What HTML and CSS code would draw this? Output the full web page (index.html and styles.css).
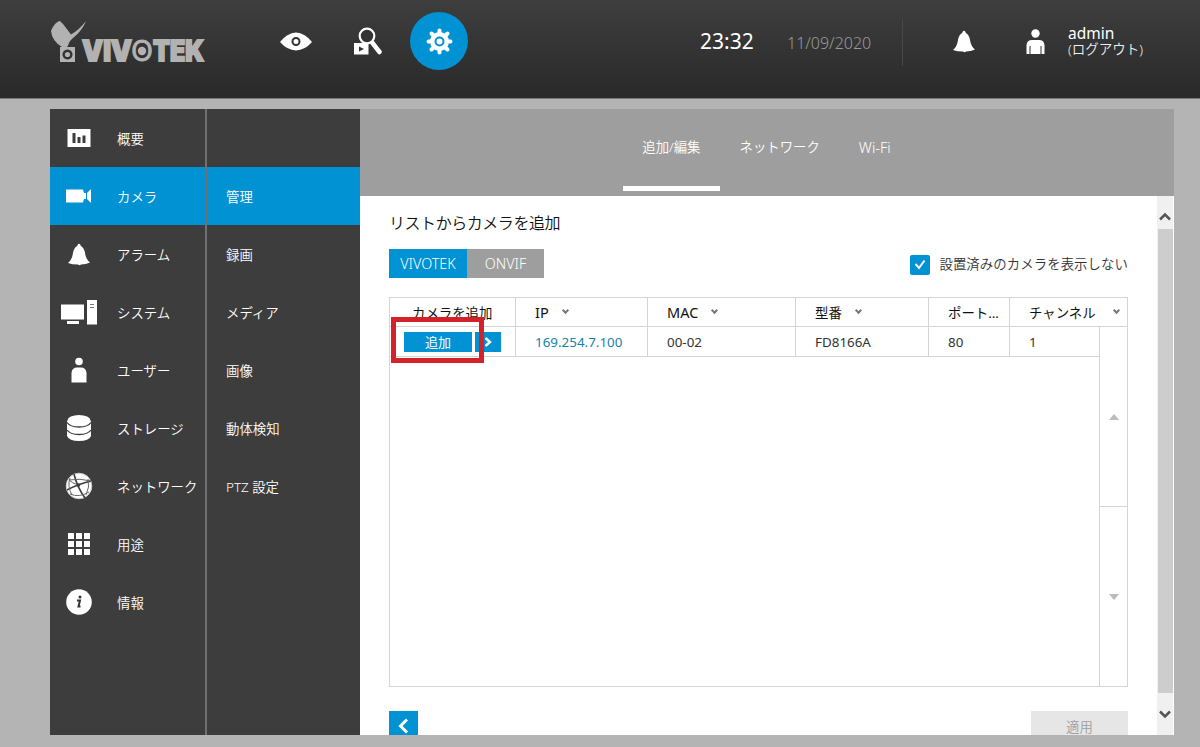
FILE: index.html
```html
<!DOCTYPE html>
<html lang="ja">
<head>
    <meta charset="UTF-8">
    <meta name="viewport" content="width=device-width, initial-scale=1.0">
    <title>VIVOTEK NVR</title>
    <link rel="stylesheet" href="styles.css">
</head>
<body>

    <!-- Header -->
    <header class="header">
        <svg class="logo" width="160" height="60" viewBox="0 0 160 60">
            <path d="M1 11Q2 8 5 4Q8 1 10 1L13 4L21 14.500Q29 10 36 1Q32 11 23 18Q19 21 18 26Q15 28.500 12 27Q2 21 1 11Z"/>
            <path fill-rule="evenodd" d="M10 27H25V42H10Z M17.500 29.500a5 5 0 1 0 .01 0Z"/>
            <circle cx="17.500" cy="34.500" r="2.600"/>
            <text class="logo-text" y="41" x="32" textLength="50" lengthAdjust="spacingAndGlyphs">VIV</text>
            <text class="logo-text logo-o" y="41" x="81" textLength="22" lengthAdjust="spacingAndGlyphs">O</text>
            <circle cx="92" cy="31" r="4.200"/>
            <text class="logo-text" y="41" x="103" textLength="51" lengthAdjust="spacingAndGlyphs">TEK</text>
        </svg>
        <nav class="top-nav">
            <a href="#" class="nav-eye">
                <svg width="32" height="20" viewBox="0 0 32 20"><path fill="#fff" d="M0 10 Q7 1 16 0.500 Q25 1 32 10 Q25 18 16 18.500 Q7 18 0 10Z"/><circle cx="16" cy="9.500" r="3.500" fill="#fff" stroke="#333" stroke-width="2"/></svg>
            </a>
            <a href="#" class="nav-search">
                <svg width="30" height="28" viewBox="0 0 30 28"><path fill="#fff" d="M1 16H15.500V27.500H1Z"/><circle cx="14" cy="9" r="7.300" fill="#343434" stroke="#fff" stroke-width="2.200"/><path d="M19.500 16L26.500 25" stroke="#fff" stroke-width="4.500" stroke-linecap="round"/><path fill="#333" d="M6 19.500L11 22L6 24.500Z"/></svg>
            </a>
            <a href="#" class="nav-setup">
                <svg width="28" height="28" viewBox="-14.500 -14.500 28 28"><circle r="9.500" fill="#fff"/><path d="M0-11V11M-11 0H11M-8-8L8 8M-8 8L8-8" stroke="#fff" stroke-width="4" stroke-linecap="round"/><circle r="4" fill="#fff" stroke="#0092d3" stroke-width="2"/></svg>
            </a>
        </nav>
        <span class="time">23:32</span>
        <span class="date">11/09/2020</span>
        <span class="divider"></span>
        <svg class="header-bell" width="22" height="23" viewBox="0 0 22 23"><path fill="#fff" d="M9.500 2Q11-.5 12.500 2L12.800 3Q16 4.500 17 10Q18 16.500 22 19.500Q18 21.500 13 21.500Q11.500 23 10 21.500Q4 21.500 0 20Q4 17 5 10Q6 4.500 9.200 3Z"/></svg>
        <svg class="header-user" width="19" height="26" viewBox="0 0 19 26"><circle cx="9.500" cy="4.500" r="4.200" fill="#fff"/><path fill="#fff" d="M0.500 25V16Q1 11 6 11H13Q18 11 18.500 16V25Z"/><path d="M4 17V25M15 17V25" stroke="#333" stroke-width="1"/></svg>
        <div class="account">
            <div class="account-name">admin</div>
            <a href="#" class="logout">(ログアウト)</a>
        </div>
    </header>

    <div class="app">
        <!-- Main menu -->
        <ul class="menu">
            <li><span class="icon"><svg width="24" height="18" viewBox="0 0 24 18"><path fill="#fff" d="M.5 0H23.500V18H.5Z"/><path fill="#3d3d3d" d="M5.500 4H8.500V14H5.500ZM10.500 8H13.500V14H10.500ZM15.500 6.500H18.500V14H15.500Z"/></svg></span><span>概要</span></li>
            <li class="active"><span class="icon"><svg width="26" height="14" viewBox="0 0 26 14"><path fill="#fff" d="M0 .5H17L18 4H20V10H18L17 13.500H0ZM21 4L25 0V14L21 10Z"/></svg></span><span>カメラ</span></li>
            <li><span class="icon"><svg width="22" height="23" viewBox="0 0 22 23"><path fill="#fff" d="M9.500 2Q11-.5 12.500 2L12.800 3Q16 4.500 17 10Q18 16.500 22 19.500Q18 21.500 13 21.500Q11.500 23 10 21.500Q4 21.500 0 20Q4 17 5 10Q6 4.500 9.200 3Z"/></svg></span><span>アラーム</span></li>
            <li><span class="icon"><svg width="36" height="26" viewBox="0 0 36 26"><path fill="#fff" d="M0 5.500H23V20.500H0ZM6 22H18V25H6ZM26 1H36V25.500H26Z"/><path d="M29 5.500H33M29 8.500H33" stroke="#777"/></svg></span><span>システム</span></li>
            <li><span class="icon"><svg width="16" height="26" viewBox="0 0 16 26"><circle cx="8" cy="4.500" r="3.800" fill="#fff"/><path fill="#fff" d="M.5 25.500V16Q1 10.500 6 10.500H10Q15 10.500 15.500 16V25.500Z"/></svg></span><span>ユーザー</span></li>
            <li><span class="icon"><svg width="26" height="28" viewBox="0 0 26 28"><path fill="#fff" d="M1 7V22Q3 27 13 27T25 22V7Z"/><ellipse cx="13" cy="6.500" rx="11.500" ry="5.500" fill="#fff"/><path d="M1 8.500Q4 13 13 13T25 8.500M1 16Q4 20.500 13 20.500T25 16" fill="none" stroke="#3d3d3d" stroke-width="1.300"/></svg></span><span>ストレージ</span></li>
            <li><span class="icon"><svg width="28" height="28" viewBox="0 0 28 28"><circle cx="14" cy="14" r="12.800" fill="#fff" stroke="#ccc"/><path d="M9 2Q12 15 20 26M26 9Q13 12 2 18" fill="none" stroke="#3d3d3d" stroke-width="1.600"/><path d="M4 8Q15 6 26 9M5 22Q14 26 24 20M5 6Q2 14 7 23M4 8Q7 11 13 13M23 7Q25 15 21 23" fill="none" stroke="#666"/><circle cx="13.500" cy="13" r="1.800" fill="#3d3d3d"/></svg></span><span>ネットワーク</span></li>
            <li><span class="icon"><svg width="22" height="22" viewBox="0 0 22 22"><path fill="#fff" d="M0 0H6V6H0ZM8 0H14V6H8ZM16 0H22V6H16ZM0 8H6V14H0ZM8 8H14V14H8ZM16 8H22V14H16ZM0 16H6V22H0ZM8 16H14V22H8ZM16 16H22V22H16Z"/></svg></span><span>用途</span></li>
            <li><span class="icon"><svg width="26" height="26" viewBox="0 0 26 26"><circle cx="13" cy="13" r="12.800" fill="#fff"/><circle cx="14" cy="8" r="1.500" fill="#333"/><path d="M11 11.500H14L12.500 17.500H14.500" fill="none" stroke="#333" stroke-width="2"/></svg></span><span>情報</span></li>
        </ul>

        <!-- Sub menu -->
        <ul class="submenu">
            <li></li>
            <li class="active">管理</li>
            <li>録画</li>
            <li>メディア</li>
            <li>画像</li>
            <li>動体検知</li>
            <li>PTZ 設定</li>
        </ul>

        <main class="main">
            <nav class="tabs">
                <a href="#" class="tab selected">追加/編集</a>
                <a href="#" class="tab">ネットワーク</a>
                <a href="#" class="tab latin">Wi-Fi</a>
            </nav>

            <div class="body">
                <section class="content">
                    <h2>リストからカメラを追加</h2>

                    <div class="filter">
                        <div class="toggle">
                            <button class="on">VIVOTEK</button>
                            <button>ONVIF</button>
                        </div>
                        <div class="hide-installed">
                            <span class="checkbox"><svg width="12" height="11" viewBox="0 0 12 11"><path d="M1.500 5L5 9L10.500 1.500" fill="none" stroke="#fff" stroke-width="2"/></svg></span>
                            <span>設置済みのカメラを表示しない</span>
                        </div>
                    </div>

                    <div class="table">
                        <div class="row head">
                            <span class="first">カメラを追加</span>
                            <span class="latin">IP <i class="sort"></i></span>
                            <span class="latin">MAC <i class="sort"></i></span>
                            <span>型番 <i class="sort"></i></span>
                            <span>ポート...</span>
                            <span>チャンネル <i class="sort"></i></span>
                        </div>
                        <div class="table-body">
                            <div class="rows">
                                <div class="row">
                                    <span class="first actions">
                                        <button class="add">追加</button>
                                        <button class="go"><svg width="8" height="10" viewBox="0 0 8 10"><path d="M1.500 1L6 5L1.500 9" fill="none" stroke="#fff" stroke-width="2.400"/></svg></button>
                                        <span class="highlight"></span>
                                    </span>
                                    <span class="ip">169.254.7.100</span>
                                    <span>00-02</span>
                                    <span>FD8166A</span>
                                    <span>80</span>
                                    <span>1</span>
                                </div>
                            </div>
                            <div class="pager">
                                <div><i class="up"></i></div>
                                <div><i class="down"></i></div>
                            </div>
                        </div>
                    </div>

                    <div class="footer">
                        <button class="back"><svg width="12" height="16" viewBox="0 0 12 16"><path d="M9 1.500L2.500 8L9 14.500" fill="none" stroke="#fff" stroke-width="3"/></svg></button>
                        <button class="apply">適用</button>
                    </div>
                </section>

                <div class="scrollbar">
                    <div class="scroll-up"><svg width="12" height="9" viewBox="0 0 12 9"><path d="M1 7.500L6 2.500L11 7.500" fill="none" stroke="#555" stroke-width="2.500"/></svg></div>
                    <div class="thumb"></div>
                    <div class="scroll-down"><svg width="12" height="9" viewBox="0 0 12 9"><path d="M1 1.500L6 6.500L11 1.500" fill="none" stroke="#555" stroke-width="2.500"/></svg></div>
                </div>
            </div>
        </main>
    </div>

</body>
</html>
```
FILE: styles.css
```css
* {
    box-sizing: border-box;
}
body {
    font-family: "Noto Sans", "Noto Sans CJK JP", sans-serif;
    font-size: 13.4px;
    font-weight: 350;
    background-color: #b4b4b4;
    margin: 0;
    height: 747px;
    overflow: hidden;
}
a {
    color: inherit;
    text-decoration: none;
}
svg {
    display: block;
    flex: none;
}
button {
    border: none;
    padding: 0;
    font: inherit;
    color: #fff;
    background-color: #0092d3;
    display: flex;
    align-items: center;
    justify-content: center;
    cursor: pointer;
}
ul {
    list-style: none;
    margin: 0;
    padding: 0;
}

/* Header */
.header {
    height: 99px;
    padding-left: 50px;
    display: flex;
    align-items: flex-start;
    background: linear-gradient(#3e3e3e, #292929);
    border-bottom: 1px solid #777;
    color: #fff;
    white-space: nowrap;
}
.logo {
    margin-top: 20px;
    fill: #b2b2b2;
}
.logo-text {
    font-family: Inter, sans-serif;
    font-weight: 900;
    font-size: 28px;
    stroke: #b2b2b2;
    stroke-width: 1.8px;
}
.logo-o {
    font-weight: 400;
    stroke-width: 0.8px;
}
.top-nav {
    display: flex;
    width: 490px;
    padding-left: 70px;
}
.nav-eye {
    padding-top: 32px;
}
.nav-search {
    margin-left: 41px;
    padding-top: 27px;
}
.nav-setup {
    margin: 12px 0 0 27px;
    width: 58px;
    height: 58px;
    border-radius: 50%;
    background-color: #0092d3;
    display: flex;
    align-items: center;
    justify-content: center;
}
.time {
    width: 87px;
    margin-top: 26px;
    font-size: 21px;
    font-weight: 400;
    line-height: 30px;
}
.date {
    width: 115px;
    margin-top: 31px;
    font-size: 16px;
    line-height: 24px;
    color: #999;
}
.divider {
    width: 1px;
    height: 47px;
    margin-top: 19px;
    background-color: #484848;
}
.header-bell {
    margin: 30px 0 0 50px;
}
.header-user {
    margin: 29px 0 0 51px;
}
.account {
    margin: 24px 0 0 23px;
}
.account-name {
    font-size: 15.5px;
    font-weight: 400;
    line-height: 19px;
}
.logout {
    display: block;
    font-size: 13.5px;
    line-height: 13px;
    color: #eee;
}

/* Page frame */
.app {
    display: flex;
    width: 1124px;
    height: 626px;
    margin: 10px 0 0 50px;
}
.menu, .submenu {
    background-color: #3d3d3d;
    color: #fff;
}
.menu {
    width: 157px;
    border-right: 2px solid #707070;
}
.submenu {
    width: 153px;
}
.menu li, .submenu li {
    height: 58px;
    display: flex;
    align-items: center;
    white-space: nowrap;
}
.submenu li {
    padding: 0 0 1px 19px;
}
.icon {
    width: 58px;
    margin-right: 9px;
    display: flex;
    justify-content: center;
}
.icon + span {
    padding-bottom: 1px;
}
.active {
    background-color: #0092d3;
}
.main {
    width: 814px;
    background-color: #fff;
}
.tabs {
    height: 87px;
    padding-right: 1px;
    background-color: #9e9e9e;
    display: flex;
    justify-content: center;
    color: #fff;
}
.tab {
    height: 82px;
    padding: 0 19.5px;
    line-height: 77px;
}
.selected {
    border-bottom: 5px solid #fff;
}
.latin {
    font-size: 14.5px;
}
.body {
    height: 539px;
    display: flex;
    overflow: hidden;
}
.content {
    width: 797px;
    padding: 15px 29px 0;
}
h2 {
    margin: 0;
    font-size: 16px;
    font-weight: 350;
    line-height: 25px;
    letter-spacing: -0.45px;
    color: #111;
}
.filter {
    display: flex;
    justify-content: space-between;
    width: 739px;
    margin-top: 13px;
}
.toggle {
    display: flex;
    height: 29px;
}
.toggle button {
    width: 77px;
    font-size: 14.3px;
    background-color: #9e9e9e;
}
.toggle .on {
    width: 78px;
    background-color: #0092d3;
}
.hide-installed {
    display: flex;
    align-items: center;
    height: 29px;
    color: #333;
}
.hide-installed > span:last-child {
    padding-bottom: 2px;
    letter-spacing: 0.08px;
}
.checkbox {
    width: 20px;
    height: 20px;
    margin: 2px 9px 0 0;
    border-radius: 2px;
    background-color: #0092d3;
    display: flex;
    align-items: center;
    justify-content: center;
}

/* Camera table */
.table {
    width: 739px;
    height: 390px;
    margin-top: 19px;
    border: 1px solid #d4d4d4;
    color: #333;
}
.row {
    display: grid;
    grid-template-columns: 126px 132px 148px 133px 81px 1fr;
    height: 30px;
    border-bottom: 1px solid #d4d4d4;
    font-weight: 400;
}
.row > span {
    display: flex;
    align-items: center;
    padding-left: 19px;
    border-right: 1px solid #d4d4d4;
    white-space: nowrap;
}
.row > span:last-child {
    border-right: none;
}
.head {
    height: 29px;
    color: #111;
}
.head .first {
    padding-left: 22px;
}
.sort {
    width: 5px;
    height: 5px;
    margin: -3px 0 0 14px;
    border: solid #777;
    border-width: 0 2px 2px 0;
    transform: rotate(45deg);
}
.head span:last-child .sort {
    margin-left: 18px;
}
.table-body {
    display: flex;
    height: 359px;
}
.rows {
    width: 709px;
}
.row > .actions {
    position: relative;
    padding-left: 14px;
    gap: 3px;
}
.actions button {
    height: 20px;
    font-size: 13px;
}
.add {
    width: 68px;
}
.go {
    width: 26px;
}
/* frame around the add button */
.highlight {
    position: absolute;
    left: 1px;
    top: -10px;
    width: 93px;
    height: 46px;
    border: 5px solid #d4222a;
}
.row > .ip {
    color: #1583a8;
}
.pager {
    width: 28px;
    border-left: 1px solid #d4d4d4;
}
.pager div {
    height: 180px;
    display: flex;
    align-items: center;
    justify-content: center;
}
.pager div:first-child {
    border-bottom: 1px solid #d4d4d4;
}
.up, .down {
    border: 5px solid transparent;
}
.up {
    border-top: none;
    border-bottom: 6px solid #bbb;
}
.down {
    border-bottom: none;
    border-top: 6px solid #bbb;
}
.footer {
    display: flex;
    justify-content: space-between;
    width: 739px;
    margin-top: 24px;
}
.footer button {
    height: 29px;
}
.back {
    width: 29px;
}
.footer .apply {
    width: 97px;
    background-color: #e6e6e6;
    color: #a0a0a0;
}
.scrollbar {
    width: 16px;
    background-color: #f0f0f0;
}
.scroll-up {
    height: 33px;
    padding: 16px 2px 0;
}
.thumb {
    height: 464px;
    margin-left: 1px;
    background-color: #cdcdcd;
}
.scroll-down {
    padding: 17px 2px 0;
}
```
